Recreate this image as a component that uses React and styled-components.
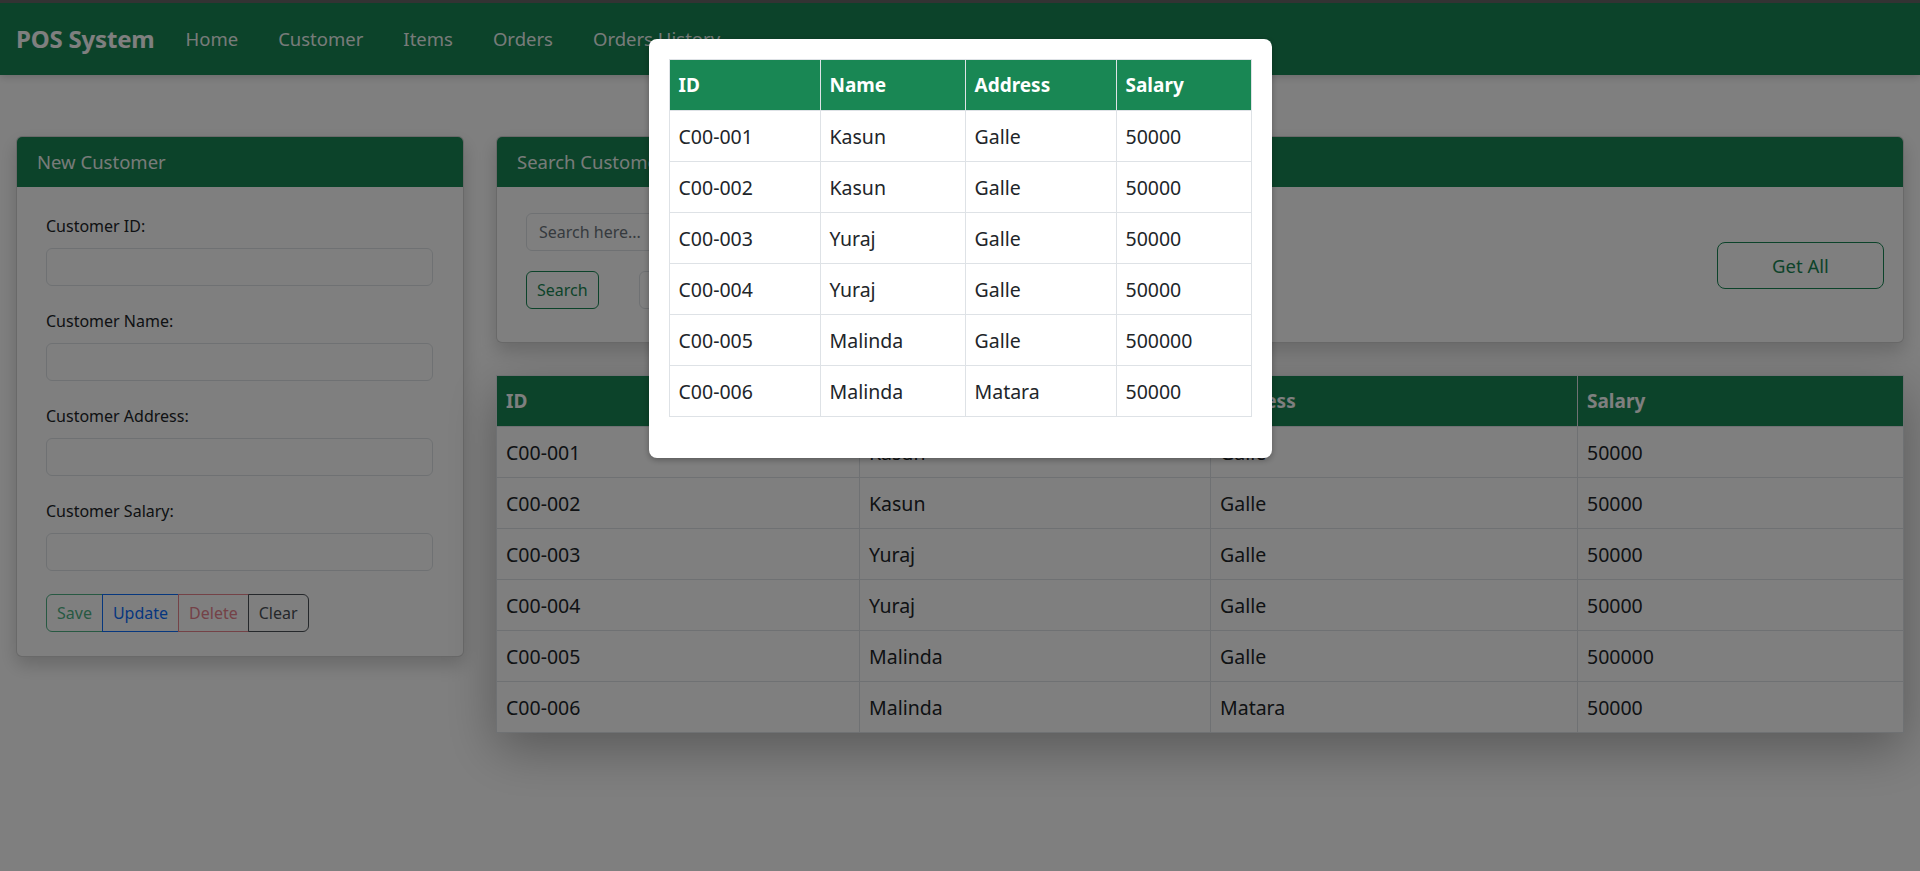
import React from "react";
import styled, { createGlobalStyle, css } from "styled-components";

const GREEN = "#198754";
const BORDER = "#dee2e6";

const GlobalStyle = createGlobalStyle`
  * { box-sizing: border-box; }
  html, body { margin: 0; padding: 0; }
  body {
    font-family: "Noto Sans", "Open Sans", sans-serif;
    color: #212529;
    background: #ffffff;
    font-size: 16px;
    line-height: 1.5;
  }
`;

const Page = styled.div`
  min-height: 871px;
  background: #ffffff;
`;

const NavBar = styled.nav`
  display: flex;
  align-items: center;
  height: 75px;
  padding: 0 16px;
  background: ${GREEN};
  border-top: 3px solid #666666;
  box-shadow: 0 2px 8px rgba(0, 0, 0, 0.18);
`;

const Brand = styled.span`
  font-size: 24px;
  font-weight: 700;
  color: #ffffff;
  margin-right: 31px;
  letter-spacing: -0.2px;
`;

const NavLinks = styled.div`
  display: flex;
  gap: 40px;
`;

const NavLink = styled.span`
  font-size: 18.5px;
  color: rgba(255, 255, 255, 0.95);
`;

const Main = styled.main`
  display: grid;
  grid-template-columns: 448px 1fr;
  gap: 32px;
  align-items: start;
  padding: 61px 16px 0;
`;

const Card = styled.section`
  background: #ffffff;
  border: 1px solid rgba(0, 0, 0, 0.175);
  border-radius: 6px;
  overflow: hidden;
  box-shadow: 0 8px 18px rgba(0, 0, 0, 0.18);
`;

const CardHeader = styled.header`
  display: flex;
  align-items: center;
  height: 50px;
  padding: 0 20px;
  background: ${GREEN};
  color: rgba(255, 255, 255, 0.95);
  font-size: 18.5px;
`;

const FormBody = styled.div`
  padding: 27px 30px 24px 29px;
`;

const Field = styled.div`
  margin-bottom: 23px;
  &:last-of-type { margin-bottom: 21px; }
`;

const Label = styled.label`
  display: block;
  font-size: 16px;
  line-height: 24px;
  margin-bottom: 10px;
`;

const TextInput = styled.input`
  display: block;
  width: ${(p) => p.$width || "100%"};
  height: 38px;
  padding: 0 12px;
  border: 1px solid ${BORDER};
  border-radius: 6px;
  background: #ffffff;
  font-family: inherit;
  font-size: 16px;
  color: #212529;
  &::placeholder { color: #6c757d; }
`;

const BtnGroup = styled.div`
  display: inline-flex;
`;

const variants = {
  success: { c: "#4fb385", b: "#4fb385" },
  primary: { c: "#0d6efd", b: "#0d6efd" },
  danger: { c: "#e9848f", b: "#e9848f" },
  dark: { c: "#4a5056", b: "#4a5056" },
};

const GroupBtn = styled.button`
  height: 38px;
  padding: 0 10px;
  font-family: inherit;
  font-size: 16px;
  background: transparent;
  color: ${(p) => variants[p.$v].c};
  border: 1px solid ${(p) => variants[p.$v].b};
  border-radius: 0;
  margin-left: -1px;
  &:first-child { margin-left: 0; border-radius: 6px 0 0 6px; }
  &:last-child { border-radius: 0 6px 6px 0; }
`;

const RightCol = styled.div`
  display: flex;
  flex-direction: column;
  gap: 32px;
`;

const SearchBody = styled.div`
  display: flex;
  align-items: center;
  justify-content: space-between;
  padding: 26px 19px 33px 29px;
`;

const SearchLeft = styled.div`
  display: flex;
  flex-direction: column;
  gap: 20px;
`;

const SearchRow = styled.div`
  display: flex;
  gap: 40px;
`;

const OutlineBtn = styled.button`
  font-family: inherit;
  background: transparent;
  color: ${GREEN};
  border: 1px solid ${GREEN};
  ${(p) =>
    p.$lg
      ? css`
          width: 167px;
          height: 47px;
          margin-top: 9px;
          font-size: 18.5px;
          border-radius: 8px;
        `
      : css`
          height: 38px;
          padding: 0 10px;
          font-size: 16px;
          border-radius: 6px;
        `}
`;

const Table = styled.table`
  width: ${(p) => p.$width || "100%"};
  border-collapse: collapse;
  table-layout: fixed;
  background: #ffffff;
  ${(p) =>
    p.$shadow &&
    css`
      box-shadow: 0 16px 48px rgba(0, 0, 0, 0.3);
    `}
  margin-bottom: ${(p) => p.$mb || 0}px;
`;

const Th = styled.th`
  height: 51px;
  padding: 1px 9px 0;
  text-align: left;
  font-size: 19px;
  font-weight: 700;
  color: #ffffff;
  background: ${GREEN};
  border: 1px solid ${BORDER};
`;

const Td = styled.td`
  height: 51px;
  padding: 1px 9px 0;
  font-size: 19.5px;
  color: #212529;
  border: 1px solid ${BORDER};
`;

const Backdrop = styled.div`
  position: fixed;
  inset: 0;
  background: rgba(0, 0, 0, 0.5);
  display: flex;
  justify-content: center;
  align-items: flex-start;
  padding-top: 39px;
`;

const Modal = styled.div`
  width: 623px;
  padding: 20px 20px 20px;
  background: #ffffff;
  border-radius: 8px;
  box-shadow: 0 2px 6px rgba(0, 0, 0, 0.3);
`;

const rows = [
  ["C00-001", "Kasun", "Galle", "50000"],
  ["C00-002", "Kasun", "Galle", "50000"],
  ["C00-003", "Yuraj", "Galle", "50000"],
  ["C00-004", "Yuraj", "Galle", "50000"],
  ["C00-005", "Malinda", "Galle", "500000"],
  ["C00-006", "Malinda", "Matara", "50000"],
];

function CustomerTable({ cols, width, shadow, mb }) {
  return (
    <Table $width={width} $shadow={shadow} $mb={mb}>
      <colgroup>
        {cols.map((w, i) => (
          <col key={i} style={w ? { width: w } : undefined} />
        ))}
      </colgroup>
      <thead>
        <tr>
          <Th>ID</Th>
          <Th>Name</Th>
          <Th>Address</Th>
          <Th>Salary</Th>
        </tr>
      </thead>
      <tbody>
        {rows.map((r) => (
          <tr key={r[0]}>
            {r.map((c, i) => (
              <Td key={i}>{c}</Td>
            ))}
          </tr>
        ))}
      </tbody>
    </Table>
  );
}

export default function App() {
  return (
    <Page>
      <GlobalStyle />
      <NavBar>
        <Brand>POS System</Brand>
        <NavLinks>
          <NavLink>Home</NavLink>
          <NavLink>Customer</NavLink>
          <NavLink>Items</NavLink>
          <NavLink>Orders</NavLink>
          <NavLink>Orders History</NavLink>
        </NavLinks>
      </NavBar>
      <Main>
        <Card>
          <CardHeader>New Customer</CardHeader>
          <FormBody>
            <Field>
              <Label>Customer ID:</Label>
              <TextInput />
            </Field>
            <Field>
              <Label>Customer Name:</Label>
              <TextInput />
            </Field>
            <Field>
              <Label>Customer Address:</Label>
              <TextInput />
            </Field>
            <Field>
              <Label>Customer Salary:</Label>
              <TextInput />
            </Field>
            <BtnGroup>
              <GroupBtn $v="success">Save</GroupBtn>
              <GroupBtn $v="primary">Update</GroupBtn>
              <GroupBtn $v="danger">Delete</GroupBtn>
              <GroupBtn $v="dark">Clear</GroupBtn>
            </BtnGroup>
          </FormBody>
        </Card>
        <RightCol>
          <Card>
            <CardHeader>Search Customer</CardHeader>
            <SearchBody>
              <SearchLeft>
                <TextInput $width="420px" placeholder="Search here..." />
                <SearchRow>
                  <OutlineBtn>Search</OutlineBtn>
                  <TextInput $width="200px" />
                </SearchRow>
              </SearchLeft>
              <OutlineBtn $lg>Get All</OutlineBtn>
            </SearchBody>
          </Card>
          <CustomerTable cols={["363px", "351px", "367px", null]} shadow />
        </RightCol>
      </Main>
      <Backdrop>
        <Modal>
          <CustomerTable cols={["151px", "145px", "151px", null]} width="583px" mb={21} />
        </Modal>
      </Backdrop>
    </Page>
  );
}
